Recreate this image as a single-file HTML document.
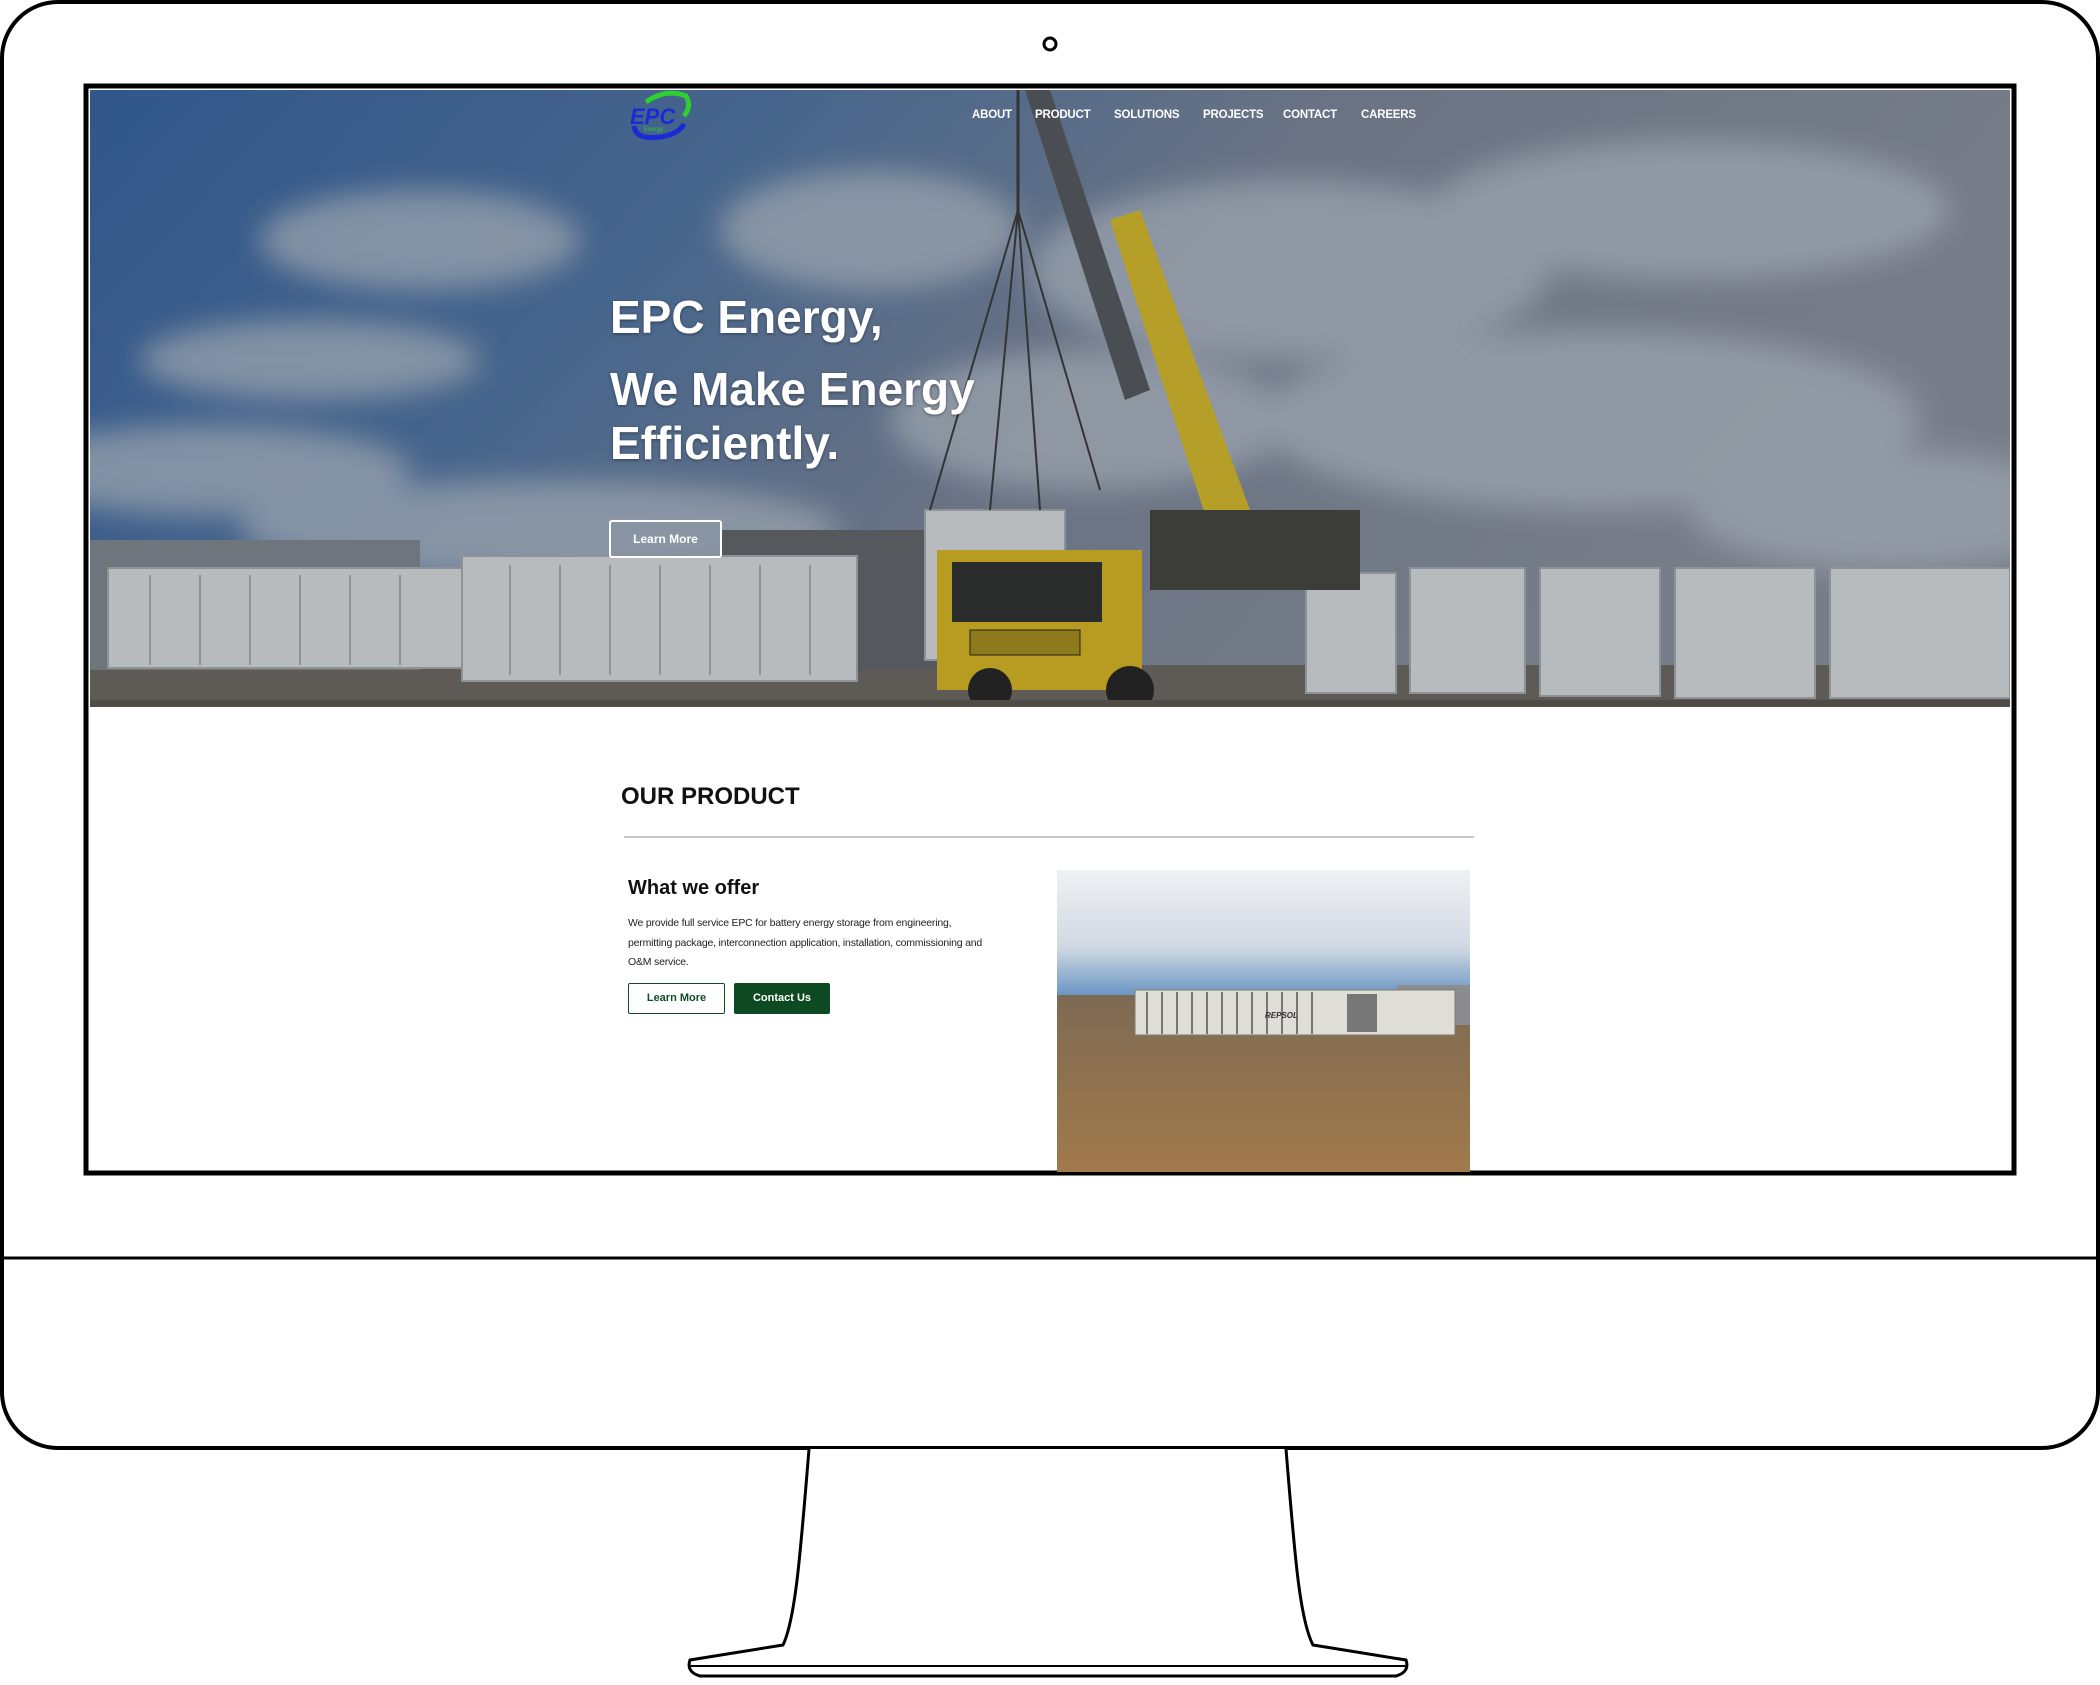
<!DOCTYPE html>
<html><head><meta charset="utf-8"><style>
html,body{margin:0;padding:0;background:#fff;}
body{width:2100px;height:1685px;position:relative;overflow:hidden;font-family:"Liberation Sans",sans-serif;}
.abs{position:absolute;}
.nav a{position:absolute;top:109px;color:#fff;font-weight:bold;font-size:11.5px;letter-spacing:-0.2px;}
h1{margin:0;position:absolute;color:#fff;font-weight:bold;font-size:46px;line-height:54px;text-shadow:0 1px 3px rgba(0,0,0,.4);}
</style></head><body>
<svg class="abs" style="left:0;top:0" width="2100" height="1685" viewBox="0 0 2100 1685">
  <rect x="2" y="2" width="2096" height="1446" rx="56" fill="#fff" stroke="#000" stroke-width="4"/>
  <line x1="2" y1="1258" x2="2098" y2="1258" stroke="#000" stroke-width="3"/>
  <circle cx="1050" cy="44" r="6" fill="none" stroke="#000" stroke-width="3"/>
  <path d="M809 1449 C 800 1560 795 1620 783 1645 L 690 1660 Q 686 1672 700 1676 L 1396 1676 Q 1410 1672 1406 1660 L 1313 1645 C 1300 1620 1295 1560 1286 1449" fill="#fff" stroke="#000" stroke-width="3"/>
  <line x1="690" y1="1666" x2="1406" y2="1666" stroke="#000" stroke-width="2"/>
  <rect x="86" y="86" width="1928" height="1087" fill="#fff" stroke="#000" stroke-width="5"/>
</svg>
<svg class="abs" style="left:90px;top:90px" width="1920" height="617" viewBox="0 0 1920 617">
  <defs>
    <linearGradient id="sky" x1="0" y1="0" x2="1" y2="0.3">
      <stop offset="0" stop-color="#30568a"/><stop offset="0.35" stop-color="#48668c"/>
      <stop offset="0.6" stop-color="#6a7384"/><stop offset="1" stop-color="#787e89"/>
    </linearGradient>
    <filter id="bl"><feGaussianBlur stdDeviation="14"/></filter>
  </defs>
  <rect width="1920" height="617" fill="url(#sky)"/>
  <g filter="url(#bl)" fill="#9aa3ad" opacity=".75">
    <ellipse cx="330" cy="150" rx="160" ry="50"/><ellipse cx="220" cy="270" rx="170" ry="40"/>
    <ellipse cx="120" cy="380" rx="200" ry="45"/><ellipse cx="780" cy="140" rx="150" ry="60"/>
    <ellipse cx="1200" cy="180" rx="260" ry="90"/><ellipse cx="1600" cy="120" rx="260" ry="70"/>
    <ellipse cx="1500" cy="330" rx="330" ry="90"/><ellipse cx="1000" cy="330" rx="200" ry="70"/>
    <ellipse cx="450" cy="440" rx="300" ry="50"/><ellipse cx="1800" cy="420" rx="200" ry="60"/>
  </g>
  <rect y="575" width="1920" height="42" fill="#5e5a55"/>
  <rect x="0" y="450" width="330" height="130" fill="#6f757c"/>
  <rect x="630" y="440" width="220" height="140" fill="#55595e"/>
  <g fill="#b7bbbe" stroke="#8d9296" stroke-width="2">
    <rect x="18" y="478" width="360" height="100"/>
    <rect x="372" y="466" width="395" height="125"/>
    <rect x="835" y="420" width="140" height="150"/>
    <rect x="1216" y="483" width="90" height="120"/><rect x="1320" y="478" width="115" height="125"/>
    <rect x="1450" y="478" width="120" height="128"/><rect x="1585" y="478" width="140" height="130"/>
    <rect x="1740" y="478" width="180" height="130"/>
  </g>
  <g stroke="#8d9296" stroke-width="2">
    <path d="M60 485v90M110 485v90M160 485v90M210 485v90M260 485v90M310 485v90M420 475v110M470 475v110M520 475v110M570 475v110M620 475v110M670 475v110M720 475v110"/>
  </g>
  <path d="M935 0 L 960 0 L 1060 300 L 1035 310 Z" fill="#4a4d52"/>
  <path d="M1020 130 L 1050 120 L 1160 420 L 1120 440 Z" fill="#b69f28"/>
  <path d="M928 120 L 840 420 M928 120 L 900 420 M928 120 L 950 420 M928 120 L 1010 400" stroke="#333" stroke-width="2" fill="none"/>
  <line x1="928" y1="0" x2="928" y2="130" stroke="#333" stroke-width="3"/>
  <rect x="1060" y="420" width="210" height="80" fill="#3c3c38"/>
  <rect x="847" y="460" width="205" height="140" fill="#b89b21"/>
  <rect x="862" y="472" width="150" height="60" fill="#2a2c2c"/>
  <rect x="880" y="540" width="110" height="25" fill="#8e7a1b" stroke="#222"/>
  <circle cx="900" cy="600" r="22" fill="#222"/><circle cx="1040" cy="600" r="24" fill="#222"/>
  <rect y="610" width="1920" height="7" fill="#4f4b47"/>
</svg>
<svg class="abs" style="left:626px;top:90px" width="66" height="52" viewBox="0 0 66 52">
  <path d="M20 12 Q40 -2 60 6 Q66 16 58 26" fill="none" stroke="#2fcf2f" stroke-width="5"/>
  <path d="M8 36 Q10 52 40 46 Q54 42 58 34" fill="none" stroke="#1a2bd6" stroke-width="5"/>
  <text x="4" y="34" font-family="Liberation Sans" font-weight="bold" font-style="italic" font-size="22" fill="#1a2bd6">EPC</text>
  <text x="18" y="41" font-family="Liberation Sans" font-size="6" fill="#2fcf2f">Energy</text>
</svg>
<div class="nav">
  <a style="left:972px">ABOUT</a><a style="left:1035px">PRODUCT</a><a style="left:1114px">SOLUTIONS</a>
  <a style="left:1203px">PROJECTS</a><a style="left:1283px">CONTACT</a><a style="left:1361px">CAREERS</a>
</div>
<h1 style="left:610px;top:290px">EPC Energy,</h1>
<h1 style="left:610px;top:362px">We Make Energy<br>Efficiently.</h1>
<div class="abs" style="left:609px;top:520px;width:109px;height:34px;border:2px solid #fff;border-radius:3px;color:#fff;font-size:12px;font-weight:bold;line-height:34px;text-align:center">Learn More</div>
<div class="abs" style="left:621px;top:783px;font-size:24px;font-weight:bold;color:#111">OUR PRODUCT</div>
<div class="abs" style="left:624px;top:836px;width:850px;height:2px;background:#c8c8c8"></div>
<div class="abs" style="left:628px;top:877px;font-size:20px;font-weight:bold;color:#111">What we offer</div>
<div class="abs" style="left:628px;top:914px;white-space:nowrap;font-size:10.5px;letter-spacing:-0.2px;line-height:19.5px;color:#222">We provide full service EPC for battery energy storage from engineering,<br>permitting package, interconnection application, installation, commissioning and<br>O&amp;M service.</div>
<div class="abs" style="left:628px;top:983px;width:95px;height:29px;border:1.5px solid #0f4d26;border-radius:2px;font-size:11px;font-weight:bold;line-height:29px;text-align:center;color:#0f4d26">Learn More</div>
<div class="abs" style="left:734px;top:983px;width:96px;height:31px;background:#0d4a22;border-radius:2px;font-size:11px;font-weight:bold;line-height:31px;text-align:center;color:#fff">Contact Us</div>
<svg class="abs" style="left:1057px;top:870px" width="413" height="302" viewBox="0 0 413 302">
  <defs><linearGradient id="s2" x1="0" y1="0" x2="0" y2="1"><stop offset="0" stop-color="#f0f1f3"/><stop offset=".6" stop-color="#cfd8e2"/><stop offset="1" stop-color="#5f8fc0"/></linearGradient>
  <linearGradient id="g2" x1="0" y1="0" x2="0" y2="1"><stop offset="0" stop-color="#7d6a52"/><stop offset="1" stop-color="#a17a4c"/></linearGradient></defs>
  <rect width="413" height="130" fill="url(#s2)"/>
  <rect y="125" width="413" height="177" fill="url(#g2)"/>
  <rect x="340" y="115" width="73" height="40" fill="#8a8d90"/>
  <rect x="78" y="120" width="320" height="45" fill="#deddd6" stroke="#7e7a70"/>
  <path d="M90 122v42M105 122v42M120 122v42M135 122v42M150 122v42M165 122v42M180 122v42M195 122v42M210 122v42M225 122v42M240 122v42M255 122v42" stroke="#555" stroke-width="1.5"/>
  <rect x="290" y="124" width="30" height="38" fill="#777"/>
  <text x="208" y="148" font-family="Liberation Sans" font-size="8" font-weight="bold" font-style="italic" fill="#333">REPSOL</text>
</svg>
</body></html>
